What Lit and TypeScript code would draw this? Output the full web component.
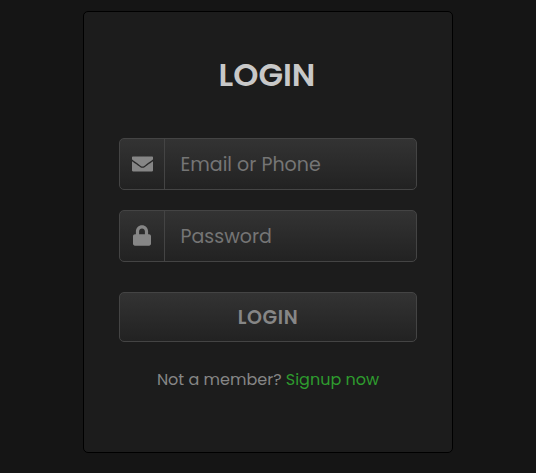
import { LitElement, html, css, svg } from "lit";
import { customElement } from "lit/decorators.js";

const envelope = svg`<path d="M502.3 190.8c3.9-3.1 9.7-.2 9.7 4.7V424c0 13-11 24-24 24H24c-13 0-24-11-24-24V195.600c0-5 5.700-7.800 9.700-4.700 22.400 17.400 52.100 39.500 154.100 113.600 21.100 15.400 56.700 47.800 92.200 47.600 35.700.3 72-32.800 92.300-47.600 102-74.100 131.600-96.300 154-113.700zM256 320c23.200.4 56.600-29.200 73.400-41.400 132.700-96.300 142.800-104.700 173.400-128.700 5.800-4.500 9.200-11.500 9.200-18.900V88c0-13-11-24-24-24H24c-13 0-24 11-24 24v43c0 7.400 3.400 14.300 9.200 18.900 30.600 23.900 40.700 32.400 173.400 128.700 16.800 12.200 50.200 41.800 73.400 41.400z"/>`;
const lock = svg`<path d="M400 224h-24v-72C376 68.200 307.800 0 224 0S72 68.200 72 152v72H48c-26.500 0-48 21.500-48 48v192c0 26.500 21.500 48 48 48h352c26.500 0 48-21.500 48-48V272c0-26.500-21.500-48-48-48zm-104 0H152v-72c0-39.700 32.300-72 72-72s72 32.300 72 72v72z"/>`;

@customElement("app-root")
export class AppRoot extends LitElement {
  static styles = css`
    :host {
      display: flex;
      justify-content: center;
      align-items: flex-start;
      box-sizing: border-box;
      height: 473px;
      padding-top: 11px;
      background: #151515;
      font-family: Poppins, sans-serif;
    }
    * { box-sizing: border-box; }
    .card {
      width: 370px;
      height: 442px;
      padding: 33px 35px;
      background: #1c1c1c;
      border: 1px solid #000;
      border-radius: 5px;
      text-align: center;
    }
    .title {
      margin: 0 0 34px;
      padding-right: 2px;
      font-size: 32px;
      line-height: 59px;
      font-weight: 600;
      color: #c8c8c8;
    }
    .field {
      display: flex;
      height: 52px;
      margin-bottom: 20px;
      border: 1px solid #444;
      border-radius: 5px;
      background: linear-gradient(#333, #222);
      overflow: hidden;
    }
    .icon {
      display: flex;
      align-items: center;
      justify-content: center;
      width: 45px;
      padding-bottom: 1px;
      border-right: 1px solid #444;
      fill: #868686;
    }
    .input {
      flex: 1;
      min-width: 0;
      height: 50px;
      padding: 0 15.5px;
      border: 0;
      outline: 0;
      background: none;
      color: #868686;
      font: inherit;
      font-size: 19px;
    }
    .input::placeholder { color: #757575; opacity: 1; }
    .button {
      display: block;
      width: 100%;
      height: 50px;
      margin: 30px 0 25px;
      padding: 0;
      border: 1px solid #444;
      border-radius: 5px;
      background: linear-gradient(#333, #222);
      color: #868686;
      font: inherit;
      font-size: 19px;
      font-weight: 600;
      letter-spacing: 0.6px;
    }
    .footer {
      font-size: 16px;
      line-height: 25px;
      color: #868686;
      white-space: nowrap;
    }
    .link { color: #2e9b2e; text-decoration: none; }
  `;

  render() {
    return html`
      <form class="card">
        <h1 class="title">LOGIN</h1>
        <div class="field">
          <span class="icon"><svg width="21" height="20" viewBox="0 0 512 512" preserveAspectRatio="none">${envelope}</svg></span>
          <input class="input" type="text" placeholder="Email or Phone" />
        </div>
        <div class="field">
          <span class="icon"><svg width="18" height="21" viewBox="0 0 448 512">${lock}</svg></span>
          <input class="input" type="password" placeholder="Password" />
        </div>
        <button class="button" type="button">LOGIN</button>
        <div class="footer">Not a member? <a class="link" href="#">Signup now</a></div>
      </form>
    `;
  }
}
